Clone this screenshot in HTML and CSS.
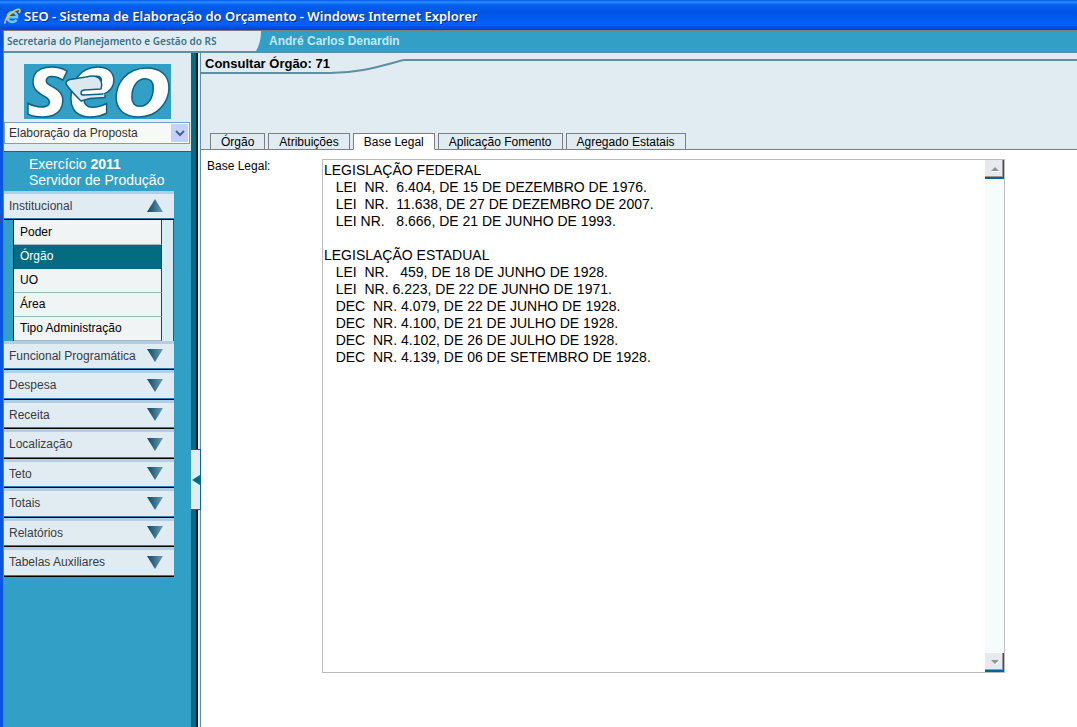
FILE: index.html
```html
<!DOCTYPE html>
<html lang="pt-BR">
<head>
<meta charset="utf-8">
<title>SEO - Sistema de Elaboração do Orçamento</title>
<link rel="stylesheet" href="styles.css">
</head>
<body>
<div class="window">
  <header class="titlebar">
    <svg class="ie-icon" viewBox="0 0 17 17" aria-hidden="true">
      <path d="M3.5 9.3H13C13 5.8 11.200 4.300 8.600 4.300C5.700 4.300 3.900 6.300 3.700 9C3.500 12 5.400 14 8.300 14C10.400 14 11.700 13 12.600 11.600" fill="none" stroke="#6cc7f5" stroke-width="2.600"/>
      <path d="M1.200 15.600C.2 13 3.500 8 8 4.500C11.500 1.700 15 .5 15.800 1.800C16.200 2.600 15.600 4 14.800 5" fill="none" stroke="#f4c22c" stroke-width="1.700"/>
    </svg>
    <span class="titlebar-text">SEO - Sistema de Elaboração do Orçamento - Windows Internet Explorer</span>
  </header>
  <div class="page">
    <div class="topbar">
      <div class="agency">Secretaria do Planejamento e Gestão do RS</div>
      <svg class="agency-edge" viewBox="0 0 10 20" aria-hidden="true"><path d="M0 0H8C8 8 6 15 3 20H0Z" fill="#e0ecf1"/></svg>
      <div class="user">André Carlos Denardin</div>
    </div>
    <div class="main">
      <aside class="sidebar">
        <div class="brand">
          <svg class="logo" viewBox="0 0 147 55" role="img" aria-label="SEO">
            <rect width="147" height="55" fill="#319fc6"/>
            <g class="logo-letters">
              <text x="3" y="52">s</text>
              <text x="43" y="52">e</text>
              <text class="logo-wide" x="89" y="52">o</text>
            </g>
            <path d="M79 30L60 31C56 31 56 27 60 26L77 25C79 20 77 14 72 12.500C69 11.500 66 12 62 13L46 15.500C42 16.500 41 19 43 21.500C47 27 52 32 57 37L66 34.500L81 33.500V31" fill="#dce8ef" stroke="#0d6384" stroke-width="1.500" stroke-linejoin="round"/>
          </svg>
          <select class="phase" aria-label="Fase"><option>Elaboração da Proposta</option></select>
        </div>
        <div class="exercise">
          <div>Exercício <strong>2011</strong></div>
          <div>Servidor de Produção</div>
        </div>
        <nav class="menu">
          <button class="menu-head" type="button" aria-expanded="true">Institucional<svg class="arrow" viewBox="0 0 16 13" aria-hidden="true"><defs><linearGradient id="g"><stop offset="0" stop-color="#0b4862"/><stop offset="1" stop-color="#6e9db5"/></linearGradient></defs><path d="M8 0L16 13H0Z" fill="url(#g)"/></svg></button>
          <div class="submenu">
            <a href="#">Poder</a>
            <a href="#" class="current">Órgão</a>
            <a href="#">UO</a>
            <a href="#">Área</a>
            <a href="#">Tipo Administração</a>
          </div>
          <div class="groups">
            <button class="menu-head" type="button">Funcional Programática<svg class="arrow" viewBox="0 0 16 13" aria-hidden="true"><path d="M0 0H16L8 13Z" fill="url(#g)"/></svg></button>
            <button class="menu-head" type="button">Despesa<svg class="arrow" viewBox="0 0 16 13" aria-hidden="true"><path d="M0 0H16L8 13Z" fill="url(#g)"/></svg></button>
            <button class="menu-head" type="button">Receita<svg class="arrow" viewBox="0 0 16 13" aria-hidden="true"><path d="M0 0H16L8 13Z" fill="url(#g)"/></svg></button>
            <button class="menu-head" type="button">Localização<svg class="arrow" viewBox="0 0 16 13" aria-hidden="true"><path d="M0 0H16L8 13Z" fill="url(#g)"/></svg></button>
            <button class="menu-head" type="button">Teto<svg class="arrow" viewBox="0 0 16 13" aria-hidden="true"><path d="M0 0H16L8 13Z" fill="url(#g)"/></svg></button>
            <button class="menu-head" type="button">Totais<svg class="arrow" viewBox="0 0 16 13" aria-hidden="true"><path d="M0 0H16L8 13Z" fill="url(#g)"/></svg></button>
            <button class="menu-head" type="button">Relatórios<svg class="arrow" viewBox="0 0 16 13" aria-hidden="true"><path d="M0 0H16L8 13Z" fill="url(#g)"/></svg></button>
            <button class="menu-head" type="button">Tabelas Auxiliares<svg class="arrow" viewBox="0 0 16 13" aria-hidden="true"><path d="M0 0H16L8 13Z" fill="url(#g)"/></svg></button>
          </div>
        </nav>
      </aside>
      <div class="splitter">
        <button class="collapse" type="button" aria-label="Recolher menu"><svg viewBox="0 0 8 10" aria-hidden="true"><path d="M8 0V10L0 5Z" fill="#046c80"/></svg></button>
      </div>
      <main class="content">
        <div class="content-head">
          <div class="heading">
            <h1>Consultar Órgão: 71</h1>
            <svg class="curve" viewBox="0 0 74 18" aria-hidden="true"><path d="M0 16C30 16 50 9 74 3" fill="none" stroke="#5f8ea3" stroke-width="2"/></svg>
            <div class="heading-line"></div>
          </div>
          <div class="tabs" role="tablist">
            <button class="tab" role="tab" type="button">Órgão</button>
            <button class="tab" role="tab" type="button">Atribuições</button>
            <button class="tab selected" role="tab" type="button" aria-selected="true">Base Legal</button>
            <button class="tab" role="tab" type="button">Aplicação Fomento</button>
            <button class="tab" role="tab" type="button">Agregado Estatais</button>
          </div>
        </div>
        <div class="form">
          <label for="legal">Base Legal:</label>
          <div class="legal-box">
            <textarea id="legal" readonly spellcheck="false">LEGISLAÇÃO FEDERAL
   LEI  NR.  6.404, DE 15 DE DEZEMBRO DE 1976.
   LEI  NR.  11.638, DE 27 DE DEZEMBRO DE 2007.
   LEI NR.   8.666, DE 21 DE JUNHO DE 1993.

LEGISLAÇÃO ESTADUAL
   LEI  NR.   459, DE 18 DE JUNHO DE 1928.
   LEI  NR. 6.223, DE 22 DE JUNHO DE 1971.
   DEC  NR. 4.079, DE 22 DE JUNHO DE 1928.
   DEC  NR. 4.100, DE 21 DE JULHO DE 1928.
   DEC  NR. 4.102, DE 26 DE JULHO DE 1928.
   DEC  NR. 4.139, DE 06 DE SETEMBRO DE 1928.</textarea>
            <div class="scroll">
              <button type="button" aria-label="Rolar para cima"><svg viewBox="0 0 9 6" aria-hidden="true"><path d="M1 5H9V6H1Z" fill="#fff"/><path d="M4 1L8 5H0Z" fill="#939393"/></svg></button>
              <button type="button" aria-label="Rolar para baixo"><svg viewBox="0 0 9 6" aria-hidden="true"><path d="M9 1L5 6L4 5L8 1Z" fill="#fff"/><path d="M0 1H8L4 5Z" fill="#939393"/></svg></button>
            </div>
          </div>
        </div>
      </main>
    </div>
  </div>
</div>
</body>
</html>
```
FILE: styles.css
```css
* { box-sizing: border-box; }
body {
  margin: 0;
  font-family: "Liberation Sans", Arial, sans-serif;
  font-size: 12px;
  color: #000;
}
button, select, textarea { font: inherit; margin: 0; border-radius: 0; }
svg { display: block; }

.window { display: flex; flex-direction: column; min-height: 100vh; }
.titlebar {
  display: flex;
  align-items: center;
  gap: 3px;
  height: 30px;
  padding: 2px 4px 0;
  background: linear-gradient(#0058e6 0, #2a8cff 2px, #0560f0 5px, #0054e3 12px, #0062fb 24px, #0044cf 30px);
}
.ie-icon { width: 17px; height: 17px; }
.titlebar-text {
  color: #fff;
  font: 600 13px/16px "Noto Sans", sans-serif;
  text-shadow: 1px 1px 0 #0a2a86;
  white-space: nowrap;
}

.page {
  flex: 1;
  display: flex;
  flex-direction: column;
  border-left: 3px solid #0a55e0;
  box-shadow: inset 1px 0 #7d7b73;
  padding-left: 1px;
}
.topbar {
  display: flex;
  height: 23px;
  background: #319fc6;
  border-top: 1px solid #7d7b73;
  border-bottom: 2px solid #5f8ea3;
}
.agency {
  width: 249px;
  padding-left: 3px;
  background: #e0ecf1;
  color: #3b7388;
  font: 600 10px/20px "Noto Sans", sans-serif;
  white-space: nowrap;
}
.agency-edge { width: 10px; height: 20px; }
.user { padding-left: 6px; color: #c5e8f5; font-weight: bold; line-height: 21px; }

.main { flex: 1; display: flex; }
.sidebar { flex: none; width: 187px; background: #319fc6; }
.brand {
  display: flex;
  flex-direction: column;
  gap: 3px;
  padding-top: 11px;
  height: 99px;
  background: #e0ecf1;
  border-bottom: 1px solid #046c80;
}
.logo { width: 147px; height: 55px; margin-left: 20px; overflow: visible; }
.logo-letters {
  font: italic bold 88px "Noto Sans", sans-serif;
  fill: #fff;
  stroke: #0d6384;
  stroke-width: 1.5px;
}
.logo-wide { font-family: "DejaVu Sans", sans-serif; font-size: 86px; }
.phase {
  width: 186px;
  height: 22px;
  padding: 0 20px 0 4px;
  appearance: none;
  border: 1px solid #7f9db9;
  color: #333;
  background:
    url("data:image/svg+xml,%3Csvg xmlns='http://www.w3.org/2000/svg' width='17' height='18'%3E%3Crect width='17' height='18' rx='1' fill='%23c1d2fb'/%3E%3Cpath d='M5 7l4 4 4-4' fill='none' stroke='%234d6185' stroke-width='2'/%3E%3C/svg%3E") right 1px center no-repeat,
    #f6f9f5;
}
.exercise { padding: 4px 0 3px 25px; height: 39px; color: #fff; font-size: 14px; line-height: 16px; }

.menu { width: 170px; }
.menu-head {
  display: flex;
  align-items: center;
  justify-content: space-between;
  width: 100%;
  height: 29px;
  padding: 0 11px 2px 5px;
  border: 0;
  border-top: 3px solid #b0cfe3;
  border-bottom: 1px solid #000;
  box-shadow: inset 0 -1px #2d7ba3;
  background: #e0ecf1;
  color: #3a3a44;
  text-align: left;
}
.arrow { width: 16px; height: 13px; }
.groups .menu-head:nth-child(even) { height: 30px; }
.submenu {
  margin-left: 9px;
  padding-right: 11px;
  border-left: 1px solid #000;
  border-right: 1px solid #046c80;
  background: #d9edf4;
}
.submenu a {
  display: block;
  height: 24px;
  padding-left: 6px;
  border-right: 1px solid #035463;
  border-bottom: 1px solid #9dbab9;
  background: #f0f4f5;
  color: #000;
  line-height: 23px;
  text-decoration: none;
}
.submenu a:first-child { height: 25px; line-height: 24px; }
.submenu .current { background: #046c80; border-bottom-color: #046c80; color: #fff; }

.splitter {
  position: relative;
  flex: none;
  width: 10px;
  background: linear-gradient(90deg, #046c80 5px, #02222c 5px, #02222c 7px, #e0ecf1 7px, #e0ecf1 9px, #5f8ea3 9px);
}
.collapse {
  position: absolute;
  top: 396px;
  left: 0;
  width: 10px;
  height: 61px;
  padding: 0 0 0 1px;
  background: #e0ecf1;
  border: 1px solid #046c80;
  border-left: 0;
}
.collapse svg { width: 8px; height: 10px; }

.content { flex: 1; min-width: 0; background: #fff; }
.content-head {
  display: flex;
  flex-direction: column;
  justify-content: space-between;
  height: 97px;
  background: #e0ecf1;
}
.heading { display: flex; padding-top: 3px; }
h1 {
  margin: 0;
  width: 129px;
  height: 18px;
  padding-left: 4px;
  border-bottom: 2px solid #5f8ea3;
  font-size: 13px;
  line-height: 15px;
  white-space: nowrap;
}
.curve { width: 74px; height: 18px; margin-top: 1px; }
.heading-line { flex: 1; height: 5px; border-bottom: 2px solid #5f8ea3; }
.tabs {
  display: flex;
  align-items: flex-end;
  gap: 3px;
  padding-left: 9px;
  box-shadow: inset 0 -1px #7b7f82;
}
.tab {
  height: 17px;
  padding: 0 10px;
  border: 1px solid #7b7f82;
  background: #e0ecf1;
  color: #000;
  line-height: 16px;
  white-space: nowrap;
}
.tab.selected { background: #fff; border-bottom-color: #fff; }

.form { display: flex; padding: 9px 72px 0 6px; }
label { flex: none; width: 115px; line-height: 14px; }
.legal-box { flex: 1; display: flex; height: 514px; border: 1px solid #bbb; }
textarea {
  flex: 1;
  min-width: 0;
  padding: 2px 1px;
  border: 0;
  outline: 0;
  resize: none;
  overflow: hidden;
  background: #fff;
  color: #000;
  font-size: 14px;
  line-height: 17px;
  white-space: pre;
}
.scroll {
  flex: none;
  display: flex;
  flex-direction: column;
  justify-content: space-between;
  width: 19px;
  background: #f5fcfb;
}
.scroll button {
  display: flex;
  align-items: center;
  justify-content: center;
  width: 19px;
  height: 19px;
  padding: 0 0 0 2px;
  background: #e6e9ed;
  border: 0;
  border-right: 1px solid #04629a;
  border-bottom: 2px solid #04629a;
  box-shadow: inset -1px -1px #9a9a9a;
}
.scroll svg { width: 9px; height: 6px; }
```
